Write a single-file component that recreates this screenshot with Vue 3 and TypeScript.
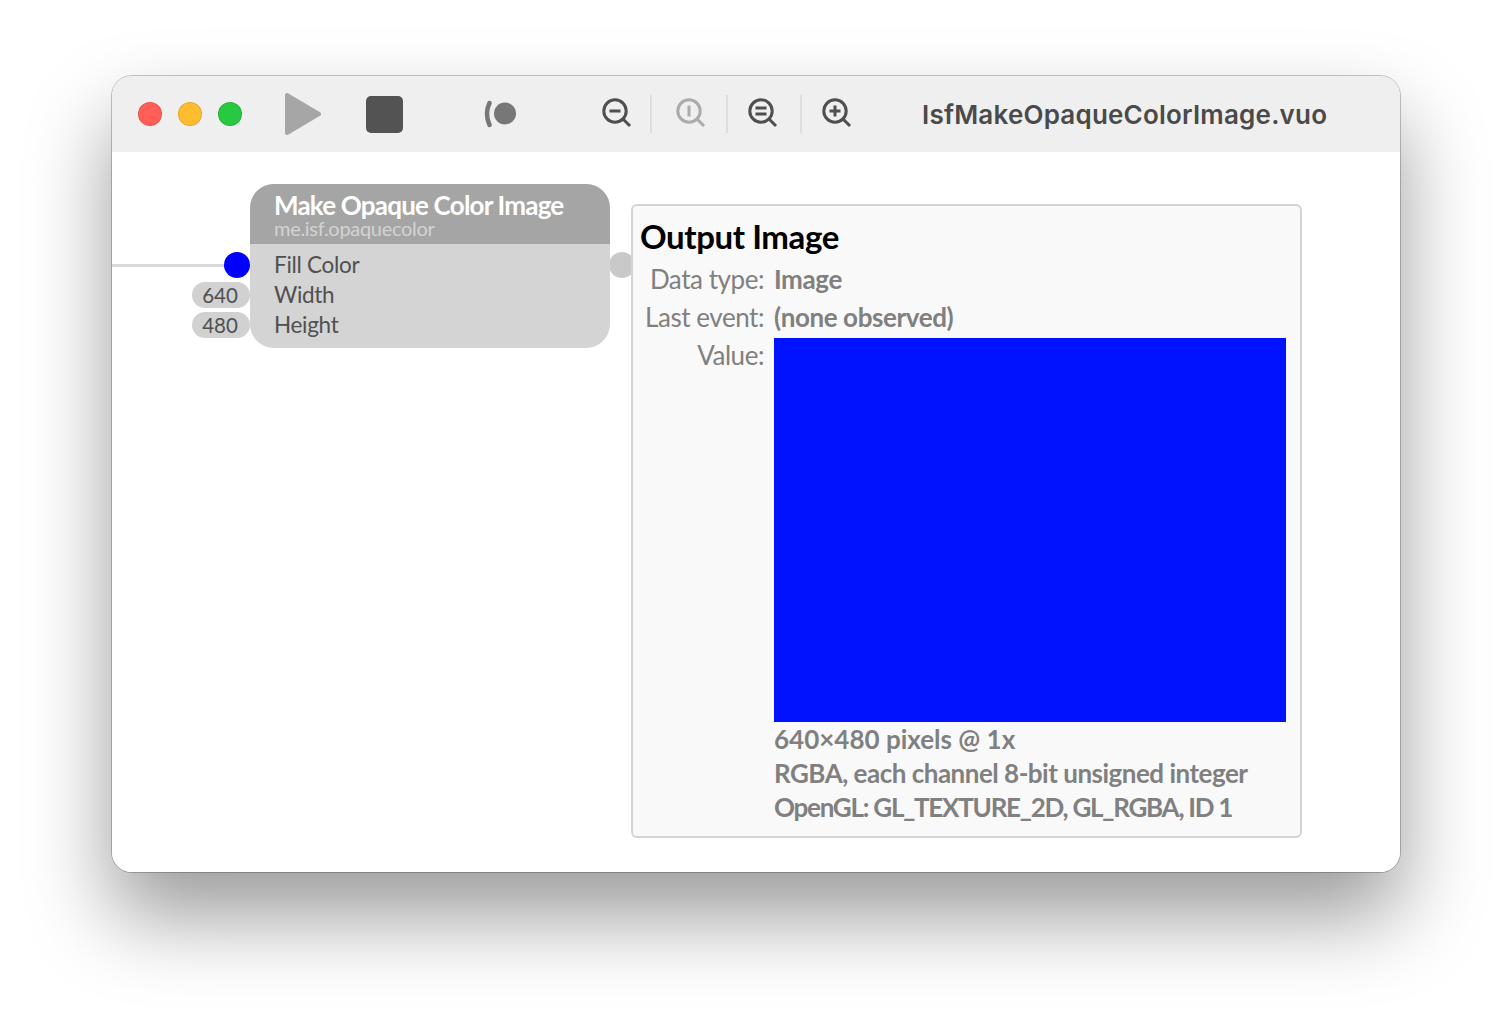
<template>
  <div class="page">
    <div class="window">
      <header class="toolbar">
        <div class="traffic">
          <span class="dot dot--red"></span>
          <span class="dot dot--yellow"></span>
          <span class="dot dot--green"></span>
        </div>
        <svg class="play" width="36" height="44" viewBox="0 0 36 44">
          <path d="M2 3 L34 22 L2 41 Z" fill="#a6a6a6" stroke="#a6a6a6" stroke-width="4" stroke-linejoin="round" />
        </svg>
        <span class="stop"></span>
        <svg class="activity" width="34" height="28" viewBox="0 0 34 28">
          <path d="M5.5 3 Q0.5 13.5 5.5 25" fill="none" stroke="#777" stroke-width="4.5" stroke-linecap="round" />
          <circle cx="21" cy="13.5" r="11" fill="#777" />
        </svg>
        <div class="zooms">
          <template v-for="(z, i) in zooms" :key="z.name">
            <span v-if="i > 0" class="sep"></span>
            <svg class="zoom" :class="{ 'zoom--off': z.off }" width="30" height="32" viewBox="0 0 30 32">
              <circle cx="13" cy="13" r="11.2" fill="none" stroke-width="3" />
              <path d="M21.5 21.5 L28 28" fill="none" stroke-width="3" />
              <path :d="z.d" fill="none" stroke-width="3" />
            </svg>
          </template>
        </div>
        <div class="title">IsfMakeOpaqueColorImage.vuo</div>
      </header>

      <main class="canvas">
        <div class="cable"></div>
        <div class="port-in"></div>
        <div class="pill pill--w">640</div>
        <div class="pill pill--h">480</div>
        <div class="port-out"></div>

        <section class="node">
          <div class="node-head">
            <div class="node-title">Make Opaque Color Image</div>
            <div class="node-class">me.isf.opaquecolor</div>
          </div>
          <div class="node-body">
            <div v-for="p in ports" :key="p" class="node-port">{{ p }}</div>
          </div>
        </section>

        <section class="panel">
          <h2 class="panel-title">Output Image</h2>
          <div class="info">
            <div class="info-label">Data type:</div>
            <div class="info-value">Image</div>
            <div class="info-label">Last event:</div>
            <div class="info-value">(none observed)</div>
            <div class="info-label">Value:</div>
            <div class="info-value">
              <div class="preview"></div>
              <div class="detail detail--size">640×480 pixels @ 1x</div>
              <div class="detail detail--format">RGBA, each channel 8-bit unsigned integer</div>
              <div class="detail detail--gl">OpenGL: GL_TEXTURE_2D, GL_RGBA, ID 1</div>
            </div>
          </div>
        </section>
      </main>
    </div>
  </div>
</template>

<script setup lang="ts">
const zooms = [
  { name: 'out', d: 'M7.5 13 H18.5', off: false },
  { name: 'actual', d: 'M13 7.5 V18.5', off: true },
  { name: 'fit', d: 'M7.5 10 H18.5 M7.5 16 H18.5', off: false },
  { name: 'in', d: 'M7.5 13 H18.5 M13 7.5 V18.5', off: false }
]
const ports = ['Fill Color', 'Width', 'Height']
</script>

<style>
html, body { margin: 0; background: #fff; }
</style>

<style scoped>
.page {
  width: 1512px;
  height: 1020px;
  padding: 76px 112px 0;
  box-sizing: border-box;
  overflow: hidden;
  background: #fff;
}
.window {
  width: 1288px;
  height: 796px;
  border-radius: 20px;
  overflow: hidden;
  background: #fff;
  box-shadow: 0 0 0 1px rgba(0, 0, 0, 0.22), 0 44px 84px rgba(0, 0, 0, 0.4);
}
.toolbar {
  height: 76px;
  background: #efefef;
  display: flex;
  align-items: center;
  font-family: "Inter", "Liberation Sans", sans-serif;
}
.traffic {
  display: flex;
  gap: 16px;
  margin-left: 26px;
}
.dot {
  width: 24px;
  height: 24px;
  border-radius: 50%;
  box-sizing: border-box;
  border: 1px solid rgba(0, 0, 0, 0.1);
}
.dot--red { background: #ff5f57; }
.dot--yellow { background: #febc2e; }
.dot--green { background: #28c840; }
.play { margin-left: 43px; }
.stop {
  width: 37px;
  height: 37px;
  border-radius: 5px;
  background: #535353;
  margin: 1px 0 0 45px;
}
.activity { margin-left: 81px; }
.zooms {
  display: flex;
  align-items: center;
  margin-left: 84px;
}
.zoom { stroke: #4f4f4f; display: block; }
.zoom--off { stroke: #ababab; }
.sep {
  width: 2px;
  height: 38px;
  background: #dedede;
  margin: 0 20px;
}
.sep:nth-of-type(1) { margin: 0 24px 0 18px; }
.sep:nth-of-type(3) { margin: 0 20px 0 22px; }
.title {
  margin-left: 70px;
  font-size: 26px;
  font-weight: 600;
  letter-spacing: 0.2px;
  color: #4a4a4a;
  white-space: nowrap;
}
.canvas {
  position: relative;
  height: 720px;
  background: #fff;
  font-family: "Lato", "Liberation Sans", sans-serif;
}
.cable {
  position: absolute;
  left: 0;
  top: 112px;
  width: 114px;
  height: 3px;
  background: #d9d9d9;
}
.port-in {
  position: absolute;
  left: 112px;
  top: 100px;
  width: 26px;
  height: 26px;
  border-radius: 50%;
  background: #0000ff;
}
.pill {
  position: absolute;
  left: 80px;
  width: 58px;
  height: 26px;
  box-sizing: border-box;
  padding-right: 2px;
  border-radius: 13px;
  background: #d1d1d1;
  color: #505050;
  font-size: 20.5px;
  line-height: 26px;
  text-align: center;
}
.pill--w { top: 130px; }
.pill--h { top: 160px; }
.port-out {
  position: absolute;
  left: 497px;
  top: 100px;
  width: 26px;
  height: 26px;
  border-radius: 50%;
  background: #c9c9c9;
}
.node {
  position: absolute;
  left: 138px;
  top: 32px;
  width: 360px;
  height: 164px;
  border-radius: 24px;
  overflow: hidden;
  background: #d4d4d4;
}
.node-head {
  height: 60px;
  box-sizing: border-box;
  padding: 7px 0 0 24px;
  background: #a5a5a5;
}
.node-title {
  color: #fff;
  font-size: 26px;
  font-weight: 700;
  line-height: 28px;
  letter-spacing: -0.8px;
  white-space: nowrap;
}
.node-class {
  color: #d3d3d3;
  font-size: 20px;
  line-height: 18px;
  letter-spacing: -0.3px;
  white-space: nowrap;
}
.node-body {
  padding: 6px 0 0 24px;
}
.node-port {
  height: 30px;
  color: #505050;
  font-size: 22.5px;
  line-height: 30px;
  letter-spacing: -0.3px;
}
.panel {
  position: absolute;
  left: 519px;
  top: 52px;
  width: 671px;
  height: 634px;
  box-sizing: border-box;
  padding: 0 14px 0 7px;
  border: 2px solid #d4d4d4;
  border-radius: 6px;
  background: #f9f9f9;
}
.panel-title {
  margin: 0;
  height: 56px;
  padding-top: 9px;
  box-sizing: border-box;
  color: #000;
  font-size: 33px;
  font-weight: 700;
  line-height: 42px;
  letter-spacing: -0.4px;
}
.info {
  display: grid;
  grid-template-columns: 124px 512px;
  column-gap: 10px;
  grid-auto-rows: 38px;
  font-size: 26px;
  line-height: 34px;
}
.info-label {
  color: #808080;
  text-align: right;
  letter-spacing: -0.45px;
  white-space: nowrap;
}
.info-value {
  color: #808080;
  font-weight: 700;
  letter-spacing: -0.4px;
  white-space: nowrap;
}
.preview {
  width: 512px;
  height: 384px;
  background: #0012ff;
}
.detail {
  height: 34px;
  line-height: 34px;
}
.detail--size { letter-spacing: 0; }
.detail--format { letter-spacing: -0.5px; }
.detail--gl { letter-spacing: -1.25px; }
</style>
